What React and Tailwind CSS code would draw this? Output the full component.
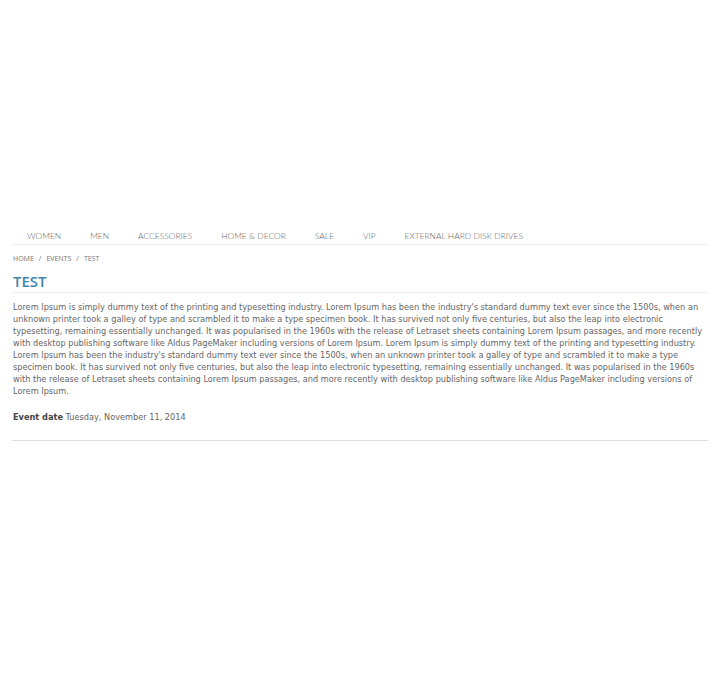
const navItems = ["WOMEN", "MEN", "ACCESSORIES", "HOME & DECOR", "SALE", "VIP", "EXTERNAL HARD DISK DRIVES"];

const lines = [
  "Lorem Ipsum is simply dummy text of the printing and typesetting industry. Lorem Ipsum has been the industry's standard dummy text ever since the 1500s, when an",
  "unknown printer took a galley of type and scrambled it to make a type specimen book. It has survived not only five centuries, but also the leap into electronic",
  "typesetting, remaining essentially unchanged. It was popularised in the 1960s with the release of Letraset sheets containing Lorem Ipsum passages, and more recently",
  "with desktop publishing software like Aldus PageMaker including versions of Lorem Ipsum. Lorem Ipsum is simply dummy text of the printing and typesetting industry.",
  "Lorem Ipsum has been the industry's standard dummy text ever since the 1500s, when an unknown printer took a galley of type and scrambled it to make a type",
  "specimen book. It has survived not only five centuries, but also the leap into electronic typesetting, remaining essentially unchanged. It was popularised in the 1960s",
  "with the release of Letraset sheets containing Lorem Ipsum passages, and more recently with desktop publishing software like Aldus PageMaker including versions of",
  "Lorem Ipsum.",
];

export default function App() {
  return (
    <div className="min-h-[680px] bg-white">
      <div className="ml-[12px] w-[696px] pt-[227px]">
        {/* top menu */}
        <nav className="flex h-[18px] items-center gap-[29px] border-b border-[#eeeeee] pt-[2px] pl-[15px] font-['Lato',sans-serif] text-[8.45px] font-light text-[#666666]">
          {navItems.map((item) => (
            <span key={item}>{item}</span>
          ))}
        </nav>

        <div className="mt-[9px] flex gap-[5px] pl-[1px] font-['Open_Sans',sans-serif] text-[7px] leading-[10px] text-[#777777]">
          <span>HOME</span>
          <span>/</span>
          <span>EVENTS</span>
          <span>/</span>
          <span>TEST</span>
        </div>

        <h1 className="mt-[8px] border-b border-[#eeeeee] pb-[1px] pl-[1px] font-['Open_Sans',sans-serif] text-[15px] leading-[19px] font-semibold text-[#3f86ad]">
          TEST
        </h1>

        <div className="mt-[8px] pl-[1px] font-['DejaVu_Sans',sans-serif] text-[8.2px] leading-[12px] text-[#666666]">
          {lines.map((line, i) => (
            <div key={i} className="whitespace-nowrap">
              {line}
            </div>
          ))}
        </div>

        <div className="mt-[14px] pl-[1px] font-['DejaVu_Sans',sans-serif] text-[8.2px] leading-[12px] text-[#666666]">
          <span className="font-bold text-[#444444]">Event date</span> Tuesday, November 11, 2014
        </div>

        <div className="mt-[17px] border-b border-[#dddddd]" />
      </div>
    </div>
  );
}
